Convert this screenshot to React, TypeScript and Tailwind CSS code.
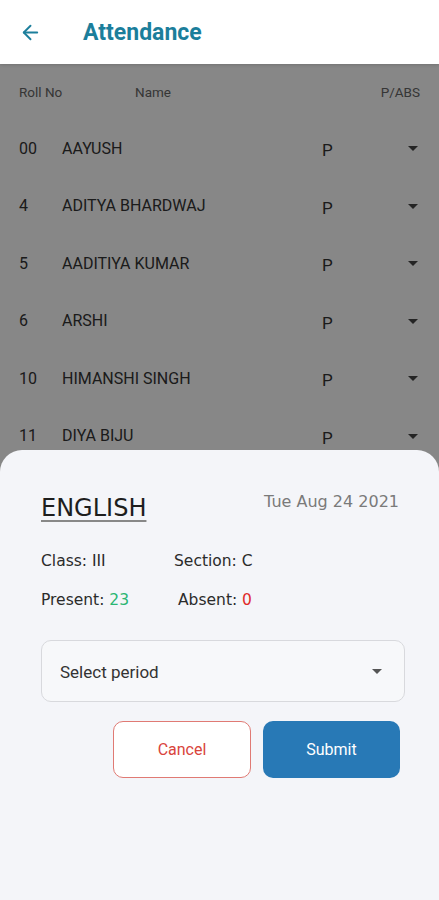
import { ArrowLeft } from "lucide-react";

const students = [
  { roll: "00", name: "AAYUSH" },
  { roll: "4", name: "ADITYA BHARDWAJ" },
  { roll: "5", name: "AADITIYA KUMAR" },
  { roll: "6", name: "ARSHI" },
  { roll: "10", name: "HIMANSHI SINGH" },
  { roll: "11", name: "DIYA BIJU" },
];

const sheetFont = { fontFamily: '"DejaVu Sans", "Open Sans", sans-serif' };

function Caret({ className = "" }: { className?: string }) {
  return (
    <svg width="10" height="5" viewBox="0 0 10 5" className={className}>
      <path d="M0 0h10L5 5z" fill="currentColor" />
    </svg>
  );
}

export default function App() {
  return (
    <div
      className="relative h-[900px] w-[439px] overflow-hidden bg-white"
      style={{ fontFamily: "Roboto, 'Liberation Sans', sans-serif" }}
    >
      <header className="relative z-10 flex h-16 items-center bg-white shadow-[0_1px_3px_rgba(0,0,0,0.15)]">
        <ArrowLeft className="ml-[19px] h-[23px] w-[23px] text-[#1d7f9c]" strokeWidth={2} />
        <h1 className="ml-[41px] mt-[2px] text-[23px] font-bold text-[#1b7e9b]">Attendance</h1>
      </header>

      <div className="flex h-14 items-center px-[19px] text-[13.5px] text-[#666]">
        <span className="w-[116px]">Roll No</span>
        <span className="flex-1">Name</span>
        <span>P/ABS</span>
      </div>
      {students.map((s) => (
        <div key={s.roll} className="flex h-[57.5px] items-center pl-[19px] pr-[21px] text-[16px] text-[#333]">
          <span className="w-[43px]">{s.roll}</span>
          <span className="flex-1">{s.name}</span>
          <span className="mt-1 w-[86px] text-[17px]">P</span>
          <Caret className="text-[#444]" />
        </div>
      ))}

      {/* dim layer behind the bottom sheet */}
      <div className="absolute inset-0 top-16 bg-black/[0.47]" />

      <div
        className="absolute inset-x-0 bottom-0 top-[450px] rounded-t-[22px] bg-[#f4f5f9] pl-[41px] pr-[34px] pt-[44px] text-[#2b2b2b]"
        style={sheetFont}
      >
        <div className="flex items-start justify-between pr-[6px]">
          <span className="text-[24px] leading-[28px] text-[#1e1e1e] underline decoration-[#888] decoration-2 underline-offset-[4px]">
            ENGLISH
          </span>
          <span className="-mt-[2px] text-[16px] leading-[20px] text-[#7a7a7a]">Tue Aug 24 2021</span>
        </div>
        <div className="mt-[27px] flex text-[15.5px] leading-[24px]">
          <span className="w-[133px]">Class: III</span>
          <span>Section: C</span>
        </div>
        <div className="mt-[15px] flex text-[15.5px] leading-[24px]">
          <span className="w-[137px]">
            Present: <span className="text-[#2bb673]">23</span>
          </span>
          <span>
            Absent: <span className="text-[#e02a2a]">0</span>
          </span>
        </div>
        <div
          className="mt-[28px] flex h-[62px] items-center justify-between rounded-[10px] border border-[#d8d9dd] bg-[#f7f8fa] pl-[18px] pr-[22px] text-[17px] text-[#333]"
          style={{ fontFamily: "Roboto, sans-serif" }}
        >
          <span className="mt-[3px]">Select period</span>
          <Caret className="text-[#555]" />
        </div>
        <div className="mt-[19px] flex justify-end gap-3 pr-[5px]" style={{ fontFamily: "Roboto, sans-serif" }}>
          <button className="h-[57px] w-[138px] rounded-[10px] border border-[#e07a74] bg-white text-[16px] text-[#d9443c]">
            Cancel
          </button>
          <button className="h-[57px] w-[137px] rounded-[10px] bg-[#2879b6] text-[16px] text-white">Submit</button>
        </div>
      </div>
    </div>
  );
}
